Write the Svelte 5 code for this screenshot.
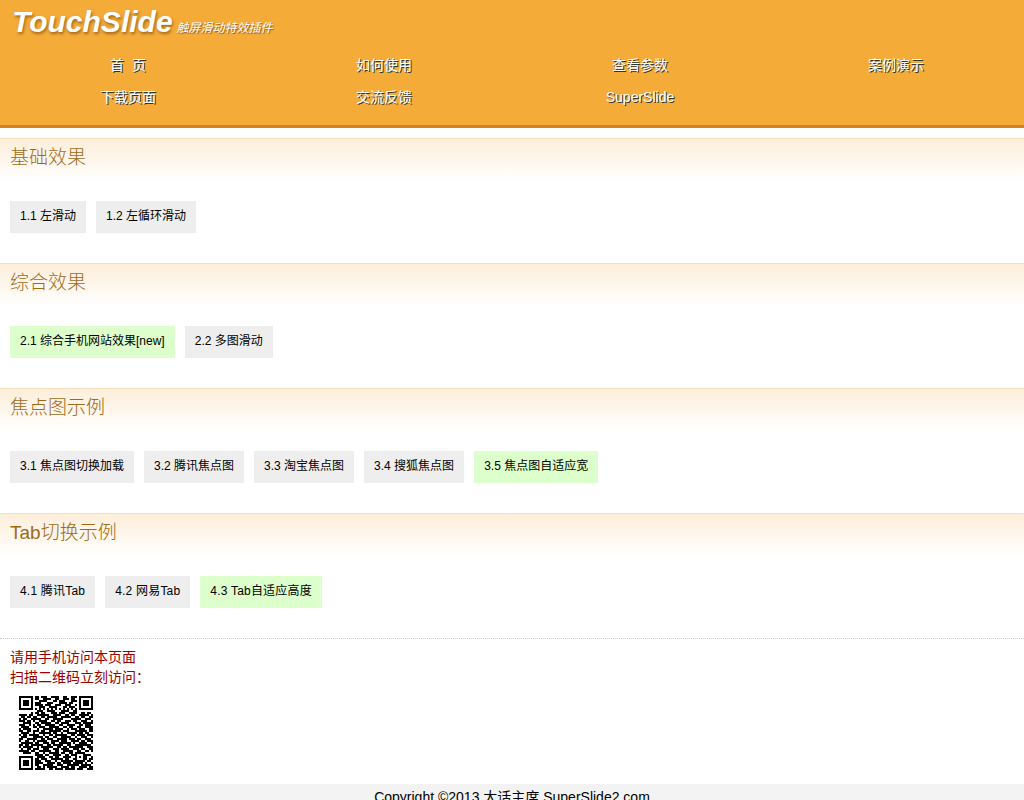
<script>
  const nav = ["首\u00a0\u00a0页", "如何使用", "查看参数", "案例演示", "下载页面", "交流反馈", "SuperSlide"];
  const sections = [
    { title: "基础效果", items: [{ t: "1.1 左滑动" }, { t: "1.2 左循环滑动" }] },
    { title: "综合效果", items: [{ t: "2.1 综合手机网站效果[new]", hot: true }, { t: "2.2 多图滑动" }] },
    { title: "焦点图示例", items: [{ t: "3.1 焦点图切换加载" }, { t: "3.2 腾讯焦点图" }, { t: "3.3 淘宝焦点图" }, { t: "3.4 搜狐焦点图" }, { t: "3.5 焦点图自适应宽", hot: true }] },
    { title: "Tab切换示例", wide: true, items: [{ t: "4.1 腾讯Tab" }, { t: "4.2 网易Tab" }, { t: "4.3 Tab自适应高度", hot: true }] }
  ];

  // rough reading of the code in the reference, finders and timing are added below
  const rows = [
    "0000000011011100111100110011100000000",
    "0000000011001111001100111011000000000",
    "0000000000111100011011100011100000000",
    "0000000011100011100011110110000000000",
    "0000000011110111001110011100100000000",
    "0000000000111001111000110111000000000",
    "0000000000000000000000000000000000000",
    "0000000001110011110001111001100000000",
    "0000000011011000111011100111100110110",
    "1111011001111110011110011011001111101",
    "0110111110011011111001111100110110011",
    "1011001111100110011111000011111001110",
    "1110111100111100110110011101100111001",
    "0011110011011111001101111000111011111",
    "1110011101100111110011001111001101110",
    "0111100110111001111100110110011001111",
    "1011111001001111101111001011101110011",
    "1100110111011001111110111000111111011",
    "0111101100111111011001001111101101100",
    "1011011111001001101111110011011110111",
    "0111001111110110011001111100100111001",
    "1100111110011011100111110111011001110",
    "1001101101111100111101110011110110111",
    "0111111011001110110011111101001111001",
    "1101100111110011011111001100111111110",
    "1011111001011111100110110111111100111",
    "0100111111001110011101111001110110011",
    "1111101100111111001100111110011001101",
    "0011111011001001111101100110000000000",
    "0000000011110110011110011011100011110",
    "0000000001111001101100111100100011001",
    "0000000011011100111111011001100011011",
    "0000000011100111001001111110000000110",
    "0000000011110011110110111101111101001",
    "0000000011001111100111001111110111110",
    "0000000001101011111001111011001111011",
    "0000000011111001101111011111011100111"
  ];

  function finder(x, y) {
    return `M${x} ${y}h7v7h-7zM${x + 1} ${y + 1}v5h5v-5zM${x + 2} ${y + 2}h3v3h-3z`;
  }
  function align(x, y) {
    return `M${x} ${y}h5v5h-5zM${x + 1} ${y + 1}v3h3v-3zM${x + 2} ${y + 2}h1v1h-1z`;
  }
  function cells() {
    let d = "";
    rows.forEach((r, y) => {
      [...r].forEach((c, x) => {
        const inAlign = x >= 28 && x <= 32 && y >= 28 && y <= 32;
        if (c === "1" && !inAlign) d += `M${x} ${y}h1v1h-1z`;
      });
    });
    for (let i = 8; i < 29; i += 2) d += `M${i} 6h1v1h-1zM6 ${i}h1v1h-1z`;
    return d;
  }
  const qr = finder(0, 0) + finder(30, 0) + finder(0, 30) + align(28, 28) + cells();
</script>

<header>
  <div class="logo">
    <span class="logo-name">TouchSlide</span>
    <span class="logo-sub">触屏滑动特效插件</span>
  </div>
  <nav>
    {#each nav as n}
      <a href="#top">{n}</a>
    {/each}
  </nav>
</header>

<main>
  {#each sections as s}
    <section>
      <h2>{s.title}</h2>
      <ul class:wide={s.wide}>
        {#each s.items as i}
          <li class:hot={i.hot}>{i.t}</li>
        {/each}
      </ul>
    </section>
  {/each}
</main>

<div class="scan">
  <p>请用手机访问本页面<br />扫描二维码立刻访问：</p>
  <svg class="qr" width="74" height="74" viewBox="0 0 37 37" shape-rendering="crispEdges">
    <path fill="#000" fill-rule="evenodd" d={qr} />
  </svg>
</div>

<footer>Copyright ©2013 大话主席 SuperSlide2.com</footer>

<style>
  :global(body) {
    font-family: "Liberation Sans", "Noto Sans CJK SC", sans-serif;
    background: #fff;
    color: #000;
  }
  header {
    background: #f5ab38;
    border-bottom: 3px solid #d4821f;
    height: 125px;
    margin-bottom: 10px;
  }
  .logo {
    display: flex;
    align-items: flex-end;
    height: 49px;
    padding-left: 12px;
    box-sizing: border-box;
    padding-bottom: 9px;
    color: #fff;
  }
  .logo-name {
    font-size: 30px;
    line-height: 36px;
    font-weight: bold;
    font-style: italic;
    text-shadow: 1px 2px 3px rgba(90, 50, 0, 0.55);
  }
  .logo-sub {
    font-size: 12px;
    font-style: italic;
    line-height: 14px;
    margin: 0 0 5px 4px;
    text-shadow: 1px 1px 1px rgba(90, 50, 0, 0.7);
  }
  nav {
    display: grid;
    grid-template-columns: repeat(4, 1fr);
    grid-auto-rows: 32px;
  }
  nav a {
    color: #fff;
    font-size: 14px;
    line-height: 32px;
    text-align: center;
    text-decoration: none;
    text-shadow: 1px 1px 0 #333;
  }
  section {
    height: 125px;
    box-sizing: border-box;
  }
  h2 {
    margin: 0;
    height: 43px;
    box-sizing: border-box;
    border-top: 1px solid #f6dfbb;
    background: linear-gradient(#fdeeda, #fff);
    color: #a06a14;
    font-size: 19px;
    font-weight: 300;
    line-height: 37px;
    padding-left: 10px;
  }
  ul {
    list-style: none;
    margin: 0;
    padding: 20px 10px 0;
    display: flex;
    gap: 10px;
  }
  ul.wide li {
    letter-spacing: 0.2px;
  }
  li {
    background: #eee;
    font-size: 12px;
    line-height: 30px;
    height: 32px;
    padding: 0 10px;
  }
  li.hot {
    background: #dfc;
  }
  .scan {
    border-top: 1px dotted #ccc;
    height: 146px;
    box-sizing: border-box;
    padding: 8px 10px 0;
  }
  .scan p {
    margin: 0;
    color: #900;
    font-size: 14px;
    line-height: 20px;
  }
  .qr {
    display: block;
    margin: 9px 0 0 9px;
  }
  footer {
    background: #f3f3f3;
    font-size: 14px;
    line-height: 20px;
    padding-top: 3px;
    height: 40px;
    text-align: center;
  }
</style>
